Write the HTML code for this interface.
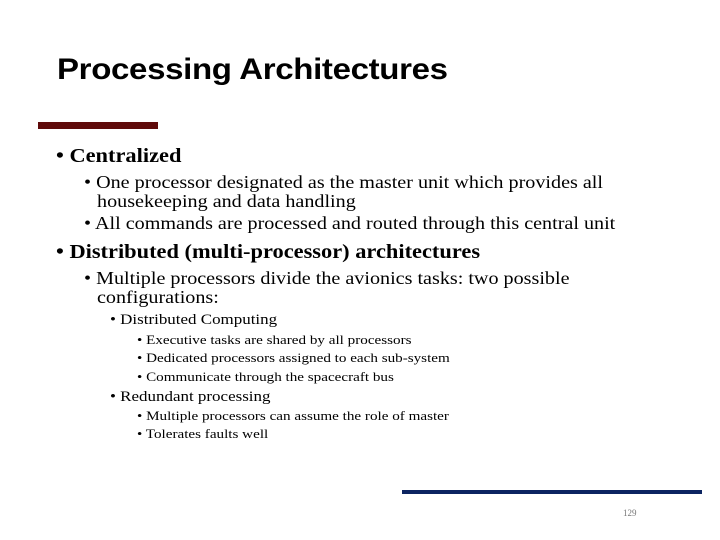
<!DOCTYPE html>
<html><head><meta charset="utf-8"><style>
body{margin:0;width:720px;height:540px;background:#fff;position:relative;overflow:hidden;font-family:"Liberation Serif",serif;color:#000}
div{position:absolute;white-space:nowrap;transform-origin:0 0}
.t{left:57px;top:53px;font-family:"Liberation Sans",sans-serif;font-weight:bold;font-size:30px;letter-spacing:-0.3px;transform:scaleX(1.1)}
.l1{font-size:20px;font-weight:bold;transform:scaleX(1.12)}
.l2{font-size:17.5px;transform:scaleX(1.15)}
.l3{font-size:14.5px;transform:scaleX(1.17)}
.l4{font-size:12.5px;transform:scaleX(1.21)}
</style></head><body>
<div class="t">Processing Architectures</div>
<div style="left:38px;top:122px;width:120px;height:7px;background:#5f0a0a"></div>
<div class="l1" style="left:56px;top:145px">• Centralized</div>
<div class="l2" style="left:84px;top:172px">• One processor designated as the master unit which provides all</div>
<div class="l2" style="left:97px;top:191px">housekeeping and data handling</div>
<div class="l2" style="left:84px;top:213px">• All commands are processed and routed through this central unit</div>
<div class="l1" style="left:56px;top:241px">• Distributed (multi-processor) architectures</div>
<div class="l2" style="left:84px;top:268px">• Multiple processors divide the avionics tasks: two possible</div>
<div class="l2" style="left:97px;top:287px">configurations:</div>
<div class="l3" style="left:110px;top:312px">• Distributed Computing</div>
<div class="l4" style="left:137px;top:333px">• Executive tasks are shared by all processors</div>
<div class="l4" style="left:137px;top:351px">• Dedicated processors assigned to each sub-system</div>
<div class="l4" style="left:137px;top:370px">• Communicate through the spacecraft bus</div>
<div class="l3" style="left:110px;top:389px">• Redundant processing</div>
<div class="l4" style="left:137px;top:409px">• Multiple processors can assume the role of master</div>
<div class="l4" style="left:137px;top:427px">• Tolerates faults well</div>
<div style="left:402px;top:490px;width:300px;height:4px;background:#0c2461"></div>
<div style="left:623px;top:508px;font-size:9px;color:#777">129</div>
</body></html>
